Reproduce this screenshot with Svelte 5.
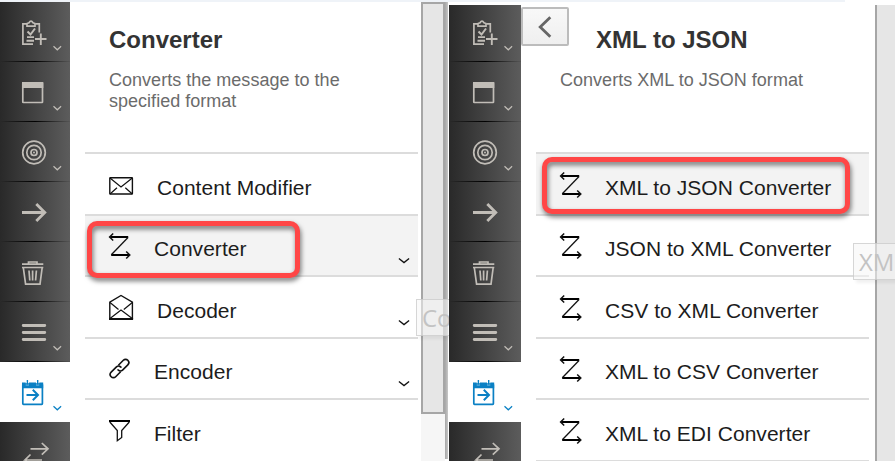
<script>
  const tools = [
    { icon: 'clipboard', menu: true },
    { icon: 'window', menu: true },
    { icon: 'target', menu: true },
    { icon: 'arrow', menu: false },
    { icon: 'trash', menu: false },
    { icon: 'lines', menu: true },
    { icon: 'calendar', menu: true, active: true },
    { icon: 'swap', menu: false }
  ];
  const steps = [
    { label: 'Content Modifier', icon: 'mail', wide: true },
    { label: 'Converter', icon: 'convert', menu: true, selected: true },
    { label: 'Decoder', icon: 'open', wide: true, menu: true },
    { label: 'Encoder', icon: 'link', menu: true },
    { label: 'Filter', icon: 'filter' }
  ];
  const converters = [
    { label: 'XML to JSON Converter', icon: 'convert', selected: true },
    { label: 'JSON to XML Converter', icon: 'convert' },
    { label: 'CSV to XML Converter', icon: 'convert' },
    { label: 'XML to CSV Converter', icon: 'convert' },
    { label: 'XML to EDI Converter', icon: 'convert' }
  ];
</script>

{#snippet toolbar()}
  <nav class="toolbar">
    {#each tools as tool}
      <div class="tool" class:active={tool.active}>
        <svg width="70" height="60" viewBox="0 0 70 60" fill="none" stroke="currentColor" stroke-width="1.7">
          {#if tool.icon === 'clipboard'}
            <path d="M27 21.8H22.9V42.2H33M35.5 21.8H39.3V30.5" />
            <path d="M27 24.2V21.5L29 20.8Q31 17.5 33 20.8L35 21.5V24.2Z" />
            <path d="M27.5 29.5L30.5 32.5L35 26.5" stroke-width="2" />
            <path d="M27 35.1H34M26.5 38.7H34M35 37H46.5M40.8 31.5V43" stroke-width="1.9" />
          {:else if tool.icon === 'window'}
            <rect x="22.8" y="20.8" width="19.7" height="19.7" rx="0.5" />
            <path d="M22 20H43.3V26H22Z" fill="currentColor" stroke="none" />
          {:else if tool.icon === 'target'}
            <circle cx="34" cy="30.5" r="11.3" />
            <circle cx="34" cy="30.5" r="7.2" />
            <circle cx="34" cy="30.5" r="3" />
            <circle cx="34" cy="30.5" r="1" fill="currentColor" stroke="none" />
          {:else if tool.icon === 'arrow'}
            <path d="M22 30.5H44M36.3 22L44.8 30.5L36.3 39" stroke-width="2.8" />
          {:else if tool.icon === 'trash'}
            <path d="M22 22.2H43.3M28.5 21.5V20H37V21.5" />
            <path d="M23.3 25.5L25.6 42.2H40L42.2 25.5M22 25.5H43.3M29 28.5L29.8 38.5M32.6 28.5V38.5M36.4 28.5L35.6 38.5" />
          {:else if tool.icon === 'lines'}
            <path d="M23.2 23.5H44.8M23.2 30.5H44.8M23.2 37.5H44.8" stroke-width="2.8" stroke-linecap="round" />
          {:else if tool.icon === 'calendar'}
            <rect x="22.8" y="22" width="19.6" height="20.3" rx="0.7" />
            <path d="M22 20.5H25.7V23.3H29V20.5H36V23.3H39.3V20.5H43.2V26.3H22Z" fill="currentColor" stroke="none" />
            <path d="M27.4 18V22.5M37.7 18V22.5" stroke-width="1.4" />
            <path d="M26.5 33H38M32.8 27.8L38 33L32.8 38.2" stroke-width="2" />
          {:else if tool.icon === 'swap'}
            <path d="M30.5 26.8H48M41.8 21L48 26.8L41.8 32.6M30.5 32.5L25 38H42M25 38L31 44" stroke-width="1.7" />
          {/if}
          {#if tool.menu}
            <path d="M53.5 44.2L57.3 47.8L61.1 44.2" stroke-width="1.2" />
          {/if}
        </svg>
      </div>
    {/each}
  </nav>
{/snippet}

{#snippet list(items)}
  <ul>
    {#each items as item}
      <li class:selected={item.selected}>
        <svg class="glyph" width="26" height="30" viewBox="0 0 26 30" fill="none" stroke="#111" stroke-width="1.2">
          {#if item.icon === 'mail'}
            <rect x="1.8" y="7.8" width="22.6" height="16.2" rx="0.5" stroke-width="1.4" />
            <path d="M2 8L13 17L24.3 8M2 24L9 17.8M24.3 24L17.3 17.8" />
          {:else if item.icon === 'open'}
            <path d="M1.8 26V9.2L13 2.5L24.4 9.2V26" stroke-width="1.4" />
            <path d="M1 26H25.1" stroke-width="2" />
            <path d="M2 9.5L10.5 16.5M24.3 9.5L15.8 16.5M2 25.5L13 17L24.3 25.5" />
          {:else if item.icon === 'convert'}
            <path d="M1.8 6H20.2M3.2 24H21.3" stroke="#000" stroke-width="2" />
            <path d="M20 6.5L3.3 23.8" stroke-width="1.3" />
            <path d="M5.2 2.5L1.6 6L5.2 9.5M18.2 20.5L21.8 24L18.2 27.5" stroke-width="1.5" />
          {:else if item.icon === 'link'}
            <g transform="translate(11.5 14.5) rotate(-45)" stroke-width="1.6">
              <path d="M-1.5 3.1H-8.5A3.2 3.2 0 0 1 -8.5 -3.3H-1A3.2 3.2 0 0 1 1.9 0.8" />
              <path d="M1.5 -3.1H8.5A3.2 3.2 0 0 1 8.5 3.3H1A3.2 3.2 0 0 1 -1.9 -0.8" />
            </g>
          {:else if item.icon === 'filter'}
            <path d="M1 5H22" stroke="#000" stroke-width="2" />
            <path d="M1.8 6L9.3 14.5V24.8L13.7 21.5V14.5L21.3 6" stroke-width="1.3" />
          {/if}
        </svg>
        <span class="label" class:wide={item.wide}>{item.label}</span>
        {#if item.menu}
          <svg class="chevron" width="12" height="8" viewBox="0 0 12 8" fill="none" stroke="#111" stroke-width="1.3">
            <path d="M0.9 1.4L6 5.6L11.1 1.4" />
          </svg>
        {/if}
      </li>
    {/each}
  </ul>
{/snippet}

<main>
  <div class="strip"></div>
  <div class="panels">
    <section class="panel first">
      {@render toolbar()}
      <div class="content">
        <header>
          <h2>Converter</h2>
          <p>Converts the message to the specified format</p>
        </header>
        {@render list(steps)}
      </div>
      <div class="track"><div class="thumb"></div></div>
      <div class="edge"></div>
      <div class="callout"></div>
      <div class="tip">Co</div>
    </section>
    <section class="panel second">
      {@render toolbar()}
      <div class="content">
        <header>
          <h2>XML to JSON</h2>
          <p>Converts XML to JSON format</p>
        </header>
        {@render list(converters)}
      </div>
      <div class="bar"></div>
      <button class="back" aria-label="Back">
        <svg width="16" height="22" viewBox="0 0 16 22" fill="none" stroke="#666" stroke-width="2.8"><path d="M13.3 1.2L3.2 11L13.3 20.8" /></svg>
      </button>
      <div class="callout"></div>
      <div class="tip">XM</div>
    </section>
  </div>
</main>

<style>
  :global(body) { margin: 0; background: #fff; }
  main {
    width: 895px;
    height: 461px;
    overflow: hidden;
    background: #fff;
    font-family: "Liberation Sans", Arial, sans-serif;
  }
  .strip { width: 845px; height: 2px; background: #eff3f8; }
  .panels { display: flex; height: 459px; }
  .panel { position: relative; display: flex; height: 459px; overflow: hidden; }
  .first { width: 449px; }
  .second { width: 446px; }
  .toolbar { flex: none; width: 70px; height: 459px; overflow: hidden; background: #2b2b2b; }
  .second .toolbar { width: 72px; clip-path: inset(3px 0 0 0); }
  .tool {
    box-sizing: border-box;
    height: 60px;
    color: #c1bdb7;
    background:
      linear-gradient(90deg, #2a2a2a, #000 50%, #555) 0 59px / 100% 1px no-repeat,
      linear-gradient(90deg, #292929, #5c5c5c);
  }
  .second .tool { padding-left: 2px; }
  .tool.active { background: #fff; color: #0a80c4; }
  .tool svg { display: block; }
  .content { flex: none; width: 333px; margin-left: 15px; }
  header { box-sizing: border-box; height: 150px; padding: 24px 0 0 24px; }
  h2 { margin: 0; font-size: 24px; line-height: 28px; color: #333; }
  p { margin: 16px 0 0; width: 250px; font-size: 18px; line-height: 21px; letter-spacing: 0.02px; color: #6b6b6b; }
  .second h2 { margin-left: 36px; }
  ul { margin: 0; padding: 0; list-style: none; }
  li {
    box-sizing: border-box;
    display: flex;
    align-items: flex-start;
    height: 62px;
    padding: 22px 8px 0 23px;
    border-top: 2px solid #dcdcdc;
  }
  li:nth-child(even) { height: 61px; padding-top: 21px; }
  li:last-child { height: 64px; border-bottom: 2px solid #dcdcdc; }
  .first li:last-child { border-bottom: 0; }
  .selected { background: #f3f3f3; }
  .glyph { flex: none; margin-top: -6px; }
  .label { flex: 1; margin-left: 20px; font-size: 21px; line-height: 24px; letter-spacing: 0.03px; color: #1c1c1c; white-space: nowrap; }
  .wide { margin-left: 23px; }
  .chevron { flex: none; margin-top: 20px; }
  .track { flex: none; width: 24px; margin-left: 3px; background: #f6f6f6; }
  .thumb { box-sizing: border-box; height: 412px; border: 2px solid #a6a6a6; background: #e6e6e6; }
  .edge { flex: none; width: 3px; height: 457px; background: linear-gradient(90deg, #a6a6a6, #c8c8c8); }
  .bar { box-sizing: border-box; width: 20px; margin: 3px 0 0 6px; border-left: 2px solid #a6a6a6; background: #e6e6e6; }
  .back {
    position: absolute;
    left: 72px;
    top: 5px;
    box-sizing: border-box;
    width: 48px;
    height: 39px;
    padding: 0;
    border: 2px solid #bcbcbc;
    border-radius: 2px;
    background: linear-gradient(#f8f8f8, #efefef);
    display: flex;
    align-items: center;
    justify-content: center;
  }
  .callout {
    position: absolute;
    left: 86.5px;
    top: 218.5px;
    box-sizing: border-box;
    width: 213.5px;
    height: 57px;
    border: 5px solid #ff4646;
    border-radius: 10px;
    filter: drop-shadow(1px 3px 2.5px rgba(0, 0, 0, 0.55));
  }
  .second .callout { left: 92.5px; top: 154.5px; width: 308px; }
  .tip {
    position: absolute;
    left: 416px;
    top: 297px;
    box-sizing: border-box;
    width: 33px;
    height: 37px;
    padding-left: 5px;
    overflow: hidden;
    border: 1px solid rgba(190, 190, 190, 0.6);
    border-right: 0;
    background: rgba(245, 245, 245, 0.55);
    font: 24px/35px "Open Sans", "Noto Sans", sans-serif;
    color: #c3c3c3;
    box-shadow: 3px 3px 3px rgba(0, 0, 0, 0.06);
  }
  .second .tip { left: 404px; top: 241px; width: 42px; }
</style>
